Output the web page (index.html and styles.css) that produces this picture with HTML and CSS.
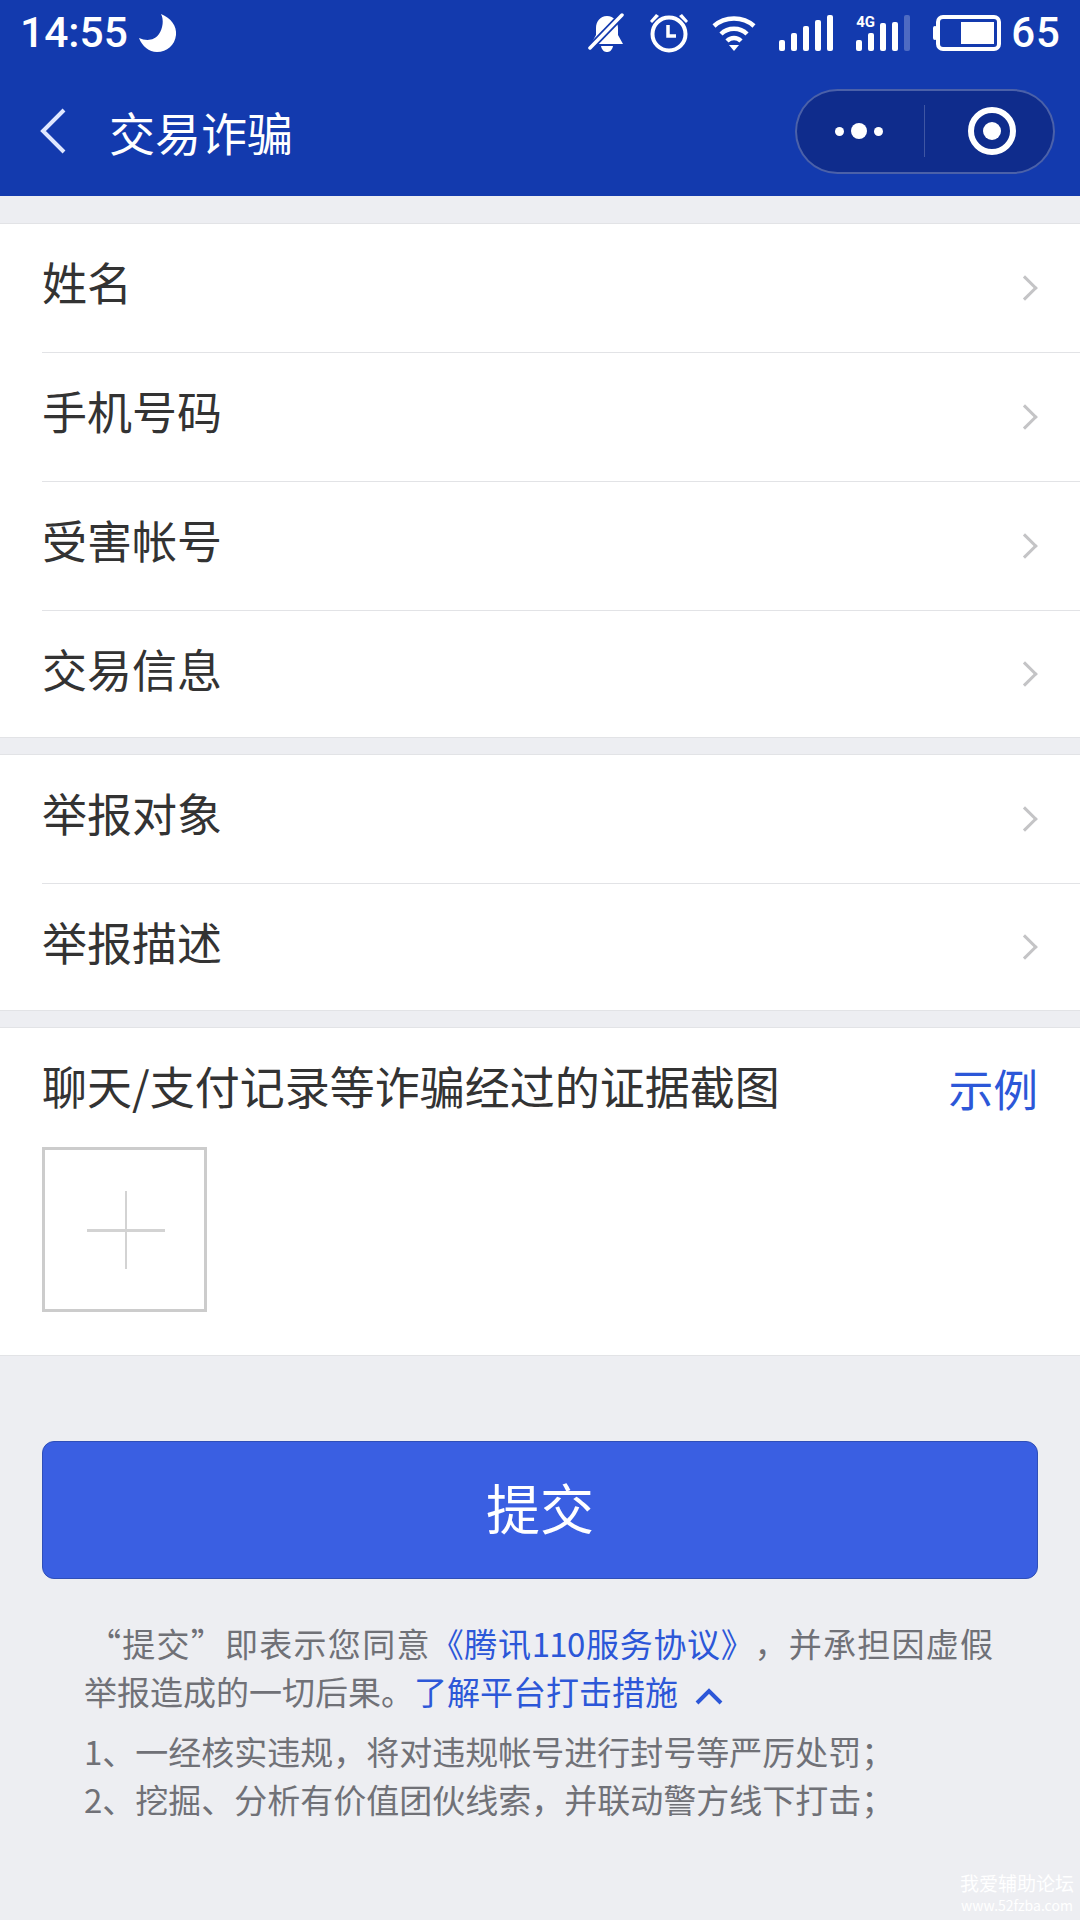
FILE: index.html
```html
<!DOCTYPE html>
<html lang="zh-CN">
<head>
    <meta charset="UTF-8">
    <meta name="viewport" content="width=device-width, initial-scale=1.0">
    <title>交易诈骗</title>
    <link rel="stylesheet" href="styles.css">
</head>
<body>

<div class="page">
    <header class="top">
        <div class="status">
            <span class="time">14:55</span>
            <svg class="moon" width="38" height="38" viewBox="0 0 38 38"><path d="M22 0 C32 4 38 12 37 21 C36 31 28 38 18 38 C10 38 3 32 0 24 C7 27 15 27 20 20 C24 14 25 6 22 0 Z" fill="#fff"/></svg>
            <div class="status-right">
                <svg class="ic-bell" width="38" height="40" viewBox="0 0 38 40"><path d="M19 3 C12 3 8 9 8 15 L8 22 L3 31 L35 31 L30 22 L30 15 C30 9 26 3 19 3 Z" fill="#fff"/><path d="M13 33 L25 33 C24 38 21 39 19 39 C17 39 14 38 13 33 Z" fill="#fff"/><path d="M2 35 L34 2" stroke="#133aae" stroke-width="7"/><path d="M2 35 L34 2" stroke="#fff" stroke-width="3.5" stroke-linecap="round"/></svg>
                <svg class="ic-alarm" width="40" height="40" viewBox="0 0 40 40"><circle cx="20" cy="21" r="16.5" fill="none" stroke="#fff" stroke-width="4"/><path d="M19 12 L19 23 L27 23" fill="none" stroke="#fff" stroke-width="3.5"/><path d="M1 8 L7 1 L10 3 L3 10 Z M39 8 L33 1 L30 3 L37 10 Z" fill="#fff"/></svg>
                <svg class="ic-wifi" width="44" height="38" viewBox="0 0 44 38"><path d="M2 12 C13 2 31 2 42 12 M9 20 C16 13 28 13 35 20 M15 27 C19 23 25 23 29 27" fill="none" stroke="#fff" stroke-width="4.5"/><path d="M17 31 L27 31 L22 37 Z" fill="#fff"/></svg>
                <svg class="ic-signal" width="54" height="36" viewBox="0 0 54 36"><g fill="#fff"><rect x="0" y="25" width="6" height="11" rx="2"/><rect x="12" y="18" width="6" height="18" rx="2"/><rect x="24" y="11" width="6" height="25" rx="2"/><rect x="36" y="5" width="6" height="31" rx="2"/><rect x="48" y="0" width="6" height="36" rx="2"/></g></svg>
                <div class="sim">
                    <span class="net">4G</span>
                    <svg width="54" height="36" viewBox="0 0 54 36"><g fill="#fff"><rect x="0" y="25" width="6" height="11" rx="2"/><rect x="12" y="18" width="6" height="18" rx="2"/><rect x="24" y="8" width="6" height="28" rx="2"/><rect x="36" y="7" width="6" height="29" rx="2"/><rect x="48" y="0" width="6" height="36" rx="2" fill-opacity="0.25"/></g></svg>
                </div>
                <svg class="ic-battery" width="68" height="36" viewBox="0 0 68 36"><rect x="5" y="2" width="61" height="32" rx="5" fill="none" stroke="#fff" stroke-width="4"/><rect x="0" y="11" width="4" height="14" rx="2" fill="#fff"/><rect x="28" y="7" width="33" height="22" fill="#fff"/></svg>
                <span class="level">65</span>
            </div>
        </div>
        <nav class="nav">
            <svg class="back" width="26" height="46" viewBox="0 0 26 46"><path d="M24 2 L3 23 L24 44" fill="none" stroke="#dfe7ff" stroke-width="4"/></svg>
            <h1 class="title">交易诈骗</h1>
            <div class="capsule">
                <div class="capsule-half capsule-left">
                    <span class="dot"></span><span class="dot dot-big"></span><span class="dot"></span>
                </div>
                <div class="capsule-line"></div>
                <div class="capsule-half capsule-right">
                    <span class="target"></span>
                </div>
            </div>
        </nav>
    </header>

    <section class="group">
        <div class="row"><span>姓名</span><i class="arrow"></i></div>
        <div class="row"><span>手机号码</span><i class="arrow"></i></div>
        <div class="row"><span>受害帐号</span><i class="arrow"></i></div>
        <div class="row"><span>交易信息</span><i class="arrow"></i></div>
    </section>

    <section class="group">
        <div class="row"><span>举报对象</span><i class="arrow"></i></div>
        <div class="row"><span>举报描述</span><i class="arrow"></i></div>
    </section>

    <section class="group evidence">
        <div class="evidence-head">
            <span>聊天/支付记录等诈骗经过的证据截图</span>
            <a class="link sample">示例</a>
        </div>
        <div class="upload"><span class="plus"></span></div>
    </section>

    <div class="submit-wrap">
        <button class="submit">提交</button>
    </div>

    <div class="notes">
        <div class="agree">
            <p class="agree-first">“提交”即表示您同意<a class="link">《腾讯110服务协议》</a>，并承担因虚假</p>
            <p>举报造成的一切后果。<a class="link">了解平台打击措施</a><svg class="up" width="30" height="18" viewBox="0 0 30 18"><path d="M3 16 L15 4 L27 16" fill="none" stroke="#2c57d8" stroke-width="4"/></svg></p>
        </div>
        <p class="rule">1、一经核实违规，将对违规帐号进行封号等严厉处罚；</p>
        <p class="rule">2、挖掘、分析有价值团伙线索，并联动警方线下打击；</p>
    </div>

    <div class="mark">
        <div class="mark-cn">我爱辅助论坛</div>
        <div class="mark-en">www.52fzba.com</div>
    </div>
</div>

</body>
</html>
```

FILE: styles.css
```css
* {
    box-sizing: border-box;
    margin: 0;
    padding: 0;
}
body {
    font-family: "Noto Sans CJK SC", Roboto, sans-serif;
    background-color: #edeef2;
    color: #333;
}
.page {
    position: relative;
    width: 1080px;
    height: 1920px;
    overflow: hidden;
}
.top {
    background-color: #133aae;
    height: 196px;
    color: #fff;
}
.status {
    display: flex;
    align-items: center;
    height: 66px;
    padding: 0 19px 0 20px;
    font-family: Roboto, sans-serif;
}
.time {
    font-size: 42.5px;
    font-weight: 500;
    line-height: 68px;
}
.moon {
    margin-left: 11px;
}
.status-right {
    display: flex;
    align-items: center;
    gap: 23px;
    margin-left: auto;
}
.sim {
    position: relative;
    height: 36px;
}
.sim svg {
    display: block;
}
.net {
    position: absolute;
    left: 0;
    top: -1px;
    font-size: 15px;
    font-weight: 700;
    line-height: 16px;
}
.level {
    font-size: 42px;
    font-weight: 500;
    line-height: 66px;
    margin-left: -13px;
    letter-spacing: 1px;
}
.nav {
    display: flex;
    align-items: center;
    height: 130px;
    padding: 0 25px 0 40px;
}
.title {
    font-size: 46px;
    font-weight: 400;
    margin-left: 43px;
}
.capsule {
    display: flex;
    align-items: center;
    margin-left: auto;
    width: 260px;
    height: 85px;
    border: 2px solid rgba(255, 255, 255, 0.25);
    border-radius: 43px;
    background-color: #0f2c8c;
}
.capsule-half {
    display: flex;
    align-items: center;
    justify-content: center;
    gap: 7px;
}
.capsule-left {
    width: 127px;
    padding-right: 4px;
}
.capsule-right {
    width: 128px;
    padding-left: 6px;
}
.capsule-line {
    width: 1px;
    height: 52px;
    background-color: rgba(255, 255, 255, 0.2);
}
.dot {
    width: 9px;
    height: 9px;
    border-radius: 50%;
    background-color: #fff;
}
.dot-big {
    width: 16px;
    height: 16px;
}
.target {
    width: 48px;
    height: 48px;
    border: 6px solid #fff;
    border-radius: 50%;
    display: flex;
    align-items: center;
    justify-content: center;
}
.target::after {
    content: '';
    width: 18px;
    height: 18px;
    border-radius: 50%;
    background-color: #fff;
}
.group {
    background-color: #fff;
    border-top: 1px solid #e2e3e6;
    border-bottom: 1px solid #e2e3e6;
    margin-top: 16px;
    padding-left: 42px;
}
.top + .group {
    margin-top: 27px;
}
.row {
    display: flex;
    align-items: center;
    justify-content: space-between;
    height: 129px;
    font-size: 45px;
    border-bottom: 1px solid #e2e3e6;
    padding-right: 40px;
}
.row span {
    margin-top: -14px;
}
.row:last-child {
    height: 126px;
    border-bottom: none;
}
.row:last-child span {
    margin-top: -12px;
}
.arrow {
    width: 18px;
    height: 18px;
    border-top: 3px solid #c4c4c6;
    border-right: 3px solid #c4c4c6;
    transform: rotate(45deg);
    margin-right: 6px;
}
.evidence {
    height: 329px;
    padding-right: 42px;
}
.evidence-head {
    display: flex;
    align-items: center;
    justify-content: space-between;
    height: 119px;
    padding-bottom: 5px;
    font-size: 45px;
}
.sample {
    font-size: 44.8px;
    margin-top: 4px;
}
.link {
    color: #2c57d8;
}
.upload {
    width: 165px;
    height: 165px;
    border: 3px solid #ccc;
    display: flex;
    align-items: center;
    justify-content: center;
}
.plus {
    position: relative;
    width: 78px;
    height: 78px;
    margin-left: 2px;
}
.plus::before {
    content: '';
    position: absolute;
    left: 0;
    right: 0;
    top: 38px;
    height: 3px;
    background-color: #d3d3d3;
}
.plus::after {
    content: '';
    position: absolute;
    top: 0;
    bottom: 0;
    left: 38px;
    width: 2px;
    background-color: #d3d3d3;
}
.submit-wrap {
    padding: 85px 42px 0;
}
.submit {
    display: block;
    width: 100%;
    height: 138px;
    padding-bottom: 8px;
    font-family: inherit;
    font-size: 54px;
    color: #fff;
    background-color: #3a5fe2;
    border: 1px solid #2f4fb8;
    border-radius: 12px;
}
.notes {
    padding: 40px 87px 0 84px;
    color: #707177;
    font-size: 33px;
    line-height: 48px;
    text-spacing-trim: space-all;
}
.agree {
    margin-bottom: 12px;
}
.agree-first {
    text-indent: 4px;
    text-align: justify;
    text-align-last: justify;
}
.agree-first .link {
    letter-spacing: -0.6px;
}
.up {
    margin-left: 16px;
}
.mark {
    position: absolute;
    right: 6px;
    bottom: 6px;
    color: #fff;
    text-align: center;
}
.mark-cn {
    font-size: 19px;
    line-height: 26px;
}
.mark-en {
    font-size: 14px;
    line-height: 18px;
}
```
